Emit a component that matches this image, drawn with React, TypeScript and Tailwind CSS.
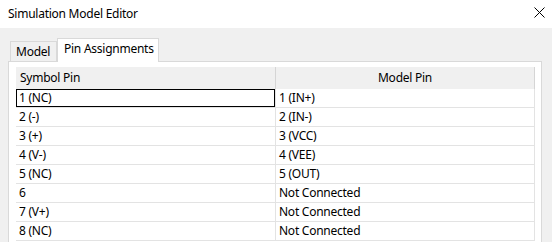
import React from 'react';

const rows: [string, string][] = [
  ['1 (NC)', '1 (IN+)'],
  ['2 (-)', '2 (IN-)'],
  ['3 (+)', '3 (VCC)'],
  ['4 (V-)', '4 (VEE)'],
  ['5 (NC)', '5 (OUT)'],
  ['6', 'Not Connected'],
  ['7 (V+)', 'Not Connected'],
  ['8 (NC)', 'Not Connected'],
];

const App: React.FC = () => {
  return (
    <div className="w-[552px] h-[242px] overflow-hidden bg-[#f0f0f0] text-[12px] tracking-[-0.25px] text-black font-['Noto_Sans',sans-serif] leading-none">
      {/* Title bar */}
      <div className="h-[28px] bg-white flex items-center justify-between pl-[8px] pr-[7px]">
        <span className="pb-[1px]">Simulation Model Editor</span>
        <svg width="11" height="11" viewBox="0 0 11 11" className="mt-[-3px]">
          <path d="M0.5 0.5 L10.5 10.5 M10.5 0.5 L0.5 10.5" stroke="#000" strokeWidth="1" />
        </svg>
      </div>

      <div className="pt-[10px] pl-[8px]">
        {/* Tabs */}
        <div className="flex items-end h-[23px] pl-[2px]">
          <div className="h-[20px] w-[47px] border border-b-0 border-[#d9d9d9] bg-[#f0f0f0] pl-[5px] flex items-center">
            Model
          </div>
          <div className="relative z-10 -mb-px h-[24px] w-[102px] border border-b-0 border-[#d9d9d9] bg-white pl-[6px] flex items-center pb-[3px]">
            Pin Assignments
          </div>
        </div>

        {/* Panel */}
        <div className="w-[534px] h-[200px] border border-[#d9d9d9] bg-white pt-[5px] pl-[7px]">
          <div className="w-[519px]">
            <div className="grid grid-cols-[260px_259px] h-[22px] bg-[#f0f0f0]">
              <div className="border-r border-[#d5d5d5] pl-[4px] flex items-center">Symbol Pin</div>
              <div className="border-r border-[#d5d5d5] flex items-center justify-center">Model Pin</div>
            </div>
            {rows.map(([sym, model], i) => (
              <div key={i} className="grid grid-cols-[260px_259px] h-[19px]">
                <div
                  className={
                    i === 0
                      ? 'border-r border-b border-[#e3e3e3] pl-[3px] flex items-center shadow-[inset_0_0_0_1px_#000]'
                      : 'border-r border-b border-[#e3e3e3] pl-[3px] flex items-center'
                  }
                >
                  {sym}
                </div>
                <div className="border-r border-b border-[#e3e3e3] pl-[3px] flex items-center">{model}</div>
              </div>
            ))}
          </div>
        </div>
      </div>
    </div>
  );
};

export default App;
